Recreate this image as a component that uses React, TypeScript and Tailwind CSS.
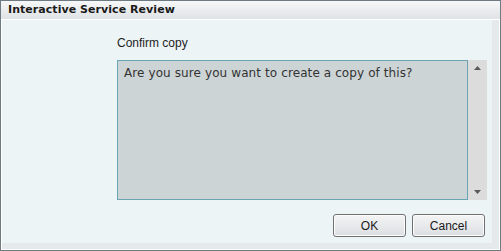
import React from "react";

export default function App() {
  return (
    <div className="w-[501px] h-[251px] flex flex-col border border-[#6f7b83] bg-[#e5e9eb]" style={{ fontFamily: '"Liberation Sans", Arial, sans-serif' }}>
      <div className="h-[19px] shrink-0 flex items-center pl-[7px] border-b border-white bg-gradient-to-b from-[#f6f7f8] to-[#dfe3e5] font-bold text-[#1a1a1a]" style={{ fontFamily: '"DejaVu Sans", Verdana, sans-serif', fontSize: '11px', letterSpacing: '0.05px' }}>
        Interactive Service Review
      </div>
      <div className="flex-1 flex flex-col border-l border-white pr-[7px] pb-[6px] border-r border-r-white border-b border-b-white">
        <div className="flex-1 flex flex-col bg-[#ecf4f6] pl-[115px] pr-[5px]">
          <div className="mt-[15px] h-[16px] text-[12px] leading-[16px] text-[#1e1e1e]">Confirm copy</div>
          <div className="mt-[9px] h-[140px] flex">
            <div className="flex-1 border border-[#6ba5b4] bg-[#cdd4d6] pl-[6px] pt-[4px] text-[12px] leading-[16px] text-[#333] tracking-[0.1px]" style={{ fontFamily: '"DejaVu Sans", Verdana, sans-serif' }}>
              Are you sure you want to create a copy of this?
            </div>
            <div className="w-[19px] bg-[#dcdcdc] flex flex-col items-center justify-between py-[6px]">
              <svg width="7" height="4" viewBox="0 0 7 4"><path d="M3.5 0 L7 4 L0 4 Z" fill="#5a5a5a" /></svg>
              <svg width="7" height="4" viewBox="0 0 7 4"><path d="M0 0 L7 0 L3.5 4 Z" fill="#5a5a5a" /></svg>
            </div>
          </div>
          <div className="mt-[14px] mr-[2px] flex justify-end gap-[6px]">
            <button className="w-[73px] h-[23px] rounded-[3px] border border-[#707070] bg-gradient-to-b from-[#f4f4f4] to-[#dcdfe2] text-[12px] text-[#1a1a1a] shadow-[inset_0_0_0_1px_#fcfcfc]">OK</button>
            <button className="w-[73px] h-[23px] rounded-[3px] border border-[#707070] bg-gradient-to-b from-[#f4f4f4] to-[#dcdfe2] text-[12px] text-[#1a1a1a] shadow-[inset_0_0_0_1px_#fcfcfc]">Cancel</button>
          </div>
        </div>
      </div>
    </div>
  );
}
